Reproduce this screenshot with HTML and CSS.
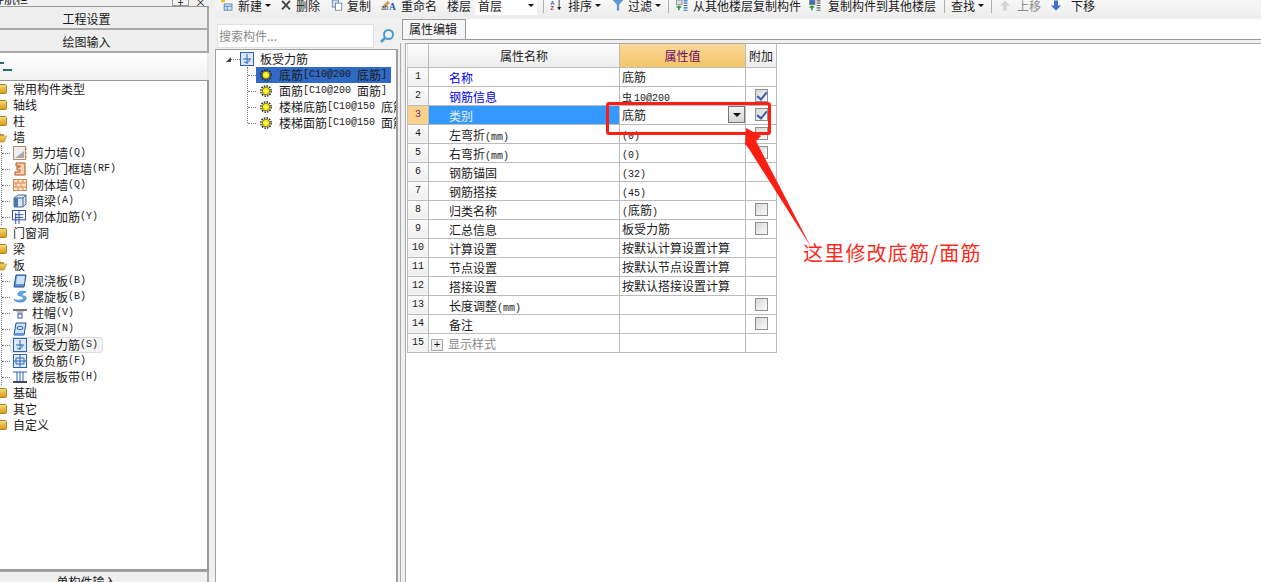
FILE: index.html
```html
<!DOCTYPE html>
<html lang="zh-CN">
<head>
    <meta charset="UTF-8">
    <title>板受力筋 属性编辑</title>
    <link rel="stylesheet" href="styles.css">
</head>
<body>
    <svg class="defs" width="0" height="0">
        <defs>
            <linearGradient id="gold" x1="0" y1="0" x2="0" y2="1"><stop offset="0" stop-color="#f8dc78"/><stop offset="1" stop-color="#d89a10"/></linearGradient>
            <symbol id="folder" viewBox="0 0 12 12"><rect x="0.5" y="1.5" width="11" height="9" rx="1" fill="url(#gold)" stroke="#a8843a"/></symbol>
            <symbol id="folder-open" viewBox="0 0 12 12"><path d="M0 2h5l1 1h3v2H4L2 10H0z" fill="#b89a50"/><path d="M3 5h9l-3 6H0z" fill="url(#gold)" stroke="#b08c3c" stroke-width=".6"/></symbol>
            <symbol id="gear" viewBox="0 0 12 12"><circle cx="6" cy="6" r="5.2" fill="none" stroke="#222" stroke-width="1.4" stroke-dasharray="1.6 1.1"/><circle cx="6" cy="6" r="3.800" fill="#ffee00" stroke="#555510" stroke-width=".8"/><circle cx="6" cy="6" r="1.200" fill="#fffbb0"/></symbol>
            <symbol id="rebar" viewBox="0 0 14 14"><rect x=".5" y=".5" width="13" height="13" fill="#dbe8f8" stroke="#2a62b8"/><path d="M3 7h8M7 2v10M4 10c4 2 6-1 5-3" fill="none" stroke="#2a62b8"/></symbol>
        </defs>
    </svg>

    <div class="app">
        <!-- 左侧导航 -->
        <aside class="nav">
            <div class="nav-top">
                <span class="nav-title">模块导航栏</span>
                <span class="nav-btn">+</span>
                <span class="nav-btn plain">×</span>
            </div>
            <div class="nav-tab">工程设置</div>
            <div class="nav-tab">绘图输入</div>
            <div class="nav-tools"><span class="collapse-mark"></span></div>

            <div class="nav-tree">
                <div class="group"><svg class="fold"><use href="#folder"/></svg>常用构件类型</div>
                <div class="group"><svg class="fold"><use href="#folder"/></svg>轴线</div>
                <div class="group"><svg class="fold"><use href="#folder"/></svg>柱</div>
                <div class="group"><svg class="fold"><use href="#folder-open"/></svg>墙</div>
                <div class="kids">
                    <div class="kid"><i class="dots"></i><span class="item"><svg class="ico" viewBox="0 0 14 14"><rect x=".5" y=".5" width="12" height="13" fill="#eee" stroke="#b98a66"/><path d="M2 12l9-7v7z" fill="#aaa"/><path d="M13 2v10" stroke="#e07020" stroke-dasharray="2 2"/></svg>剪力墙<b class="m">(Q)</b></span></div>
                    <div class="kid"><i class="dots"></i><span class="item"><svg class="ico" viewBox="0 0 14 14"><path d="M3 1h9v12H2v-3h5V8H4V5h3V4H3z" fill="#f6d2ac" stroke="#b0501c"/></svg>人防门框墙<b class="m">(RF)</b></span></div>
                    <div class="kid"><i class="dots"></i><span class="item"><svg class="ico" viewBox="0 0 14 14"><rect x=".5" y="1.5" width="13" height="11" fill="#fbe3cc" stroke="#d88850"/><path d="M1 5h12M1 9h12M5 2v3M10 2v3M3 5v4M8 5v4M5 9v3M10 9v3" stroke="#d88850"/></svg>砌体墙<b class="m">(Q)</b></span></div>
                    <div class="kid"><i class="dots"></i><span class="item"><svg class="ico" viewBox="0 0 14 14"><path d="M1 4l4-3h8v9l-3 3H1z" fill="#d8e6f4" stroke="#4a6a94"/><path d="M1 4h9v9M10 4l3-3" fill="none" stroke="#4a6a94"/><rect x="1" y="4" width="4" height="9" fill="#4a78b0"/></svg>暗梁<b class="m">(A)</b></span></div>
                    <div class="kid"><i class="dots"></i><span class="item shift"><svg class="ico" viewBox="0 0 15 15"><rect x=".5" y=".5" width="14" height="10" fill="none" stroke="#2444a8"/><path d="M7.500 1v14M3 5h9M3 8h9M4 3v12" fill="none" stroke="#2444a8"/></svg>砌体加筋<b class="m">(Y)</b></span></div>
                </div>
                <div class="group"><svg class="fold"><use href="#folder"/></svg>门窗洞</div>
                <div class="group"><svg class="fold"><use href="#folder"/></svg>梁</div>
                <div class="group"><svg class="fold"><use href="#folder-open"/></svg>板</div>
                <div class="kids">
                    <div class="kid"><i class="dots"></i><span class="item"><svg class="ico" viewBox="0 0 14 14"><path d="M3 1h10l-2 12H1z" fill="#5c94dc" stroke="#1c4c9c"/><path d="M4 2h8l-1 8H3z" fill="#cfe2f8"/></svg>现浇板<b class="m">(B)</b></span></div>
                    <div class="kid"><i class="dots"></i><span class="item"><svg class="ico" viewBox="0 0 16 14"><path d="M15 1C9-1 4 2 6 5c2 2 6 0 6 3 0 3-6 3-11 2 4 4 14 4 14-2 0-3-6-2-5-4 1-1 3-2 5-3z" fill="#5ca8ec" stroke="#1c70c8" stroke-width=".7"/></svg>螺旋板<b class="m">(B)</b></span></div>
                    <div class="kid"><i class="dots"></i><span class="item"><svg class="ico" viewBox="0 0 14 14"><rect x="0" y="3" width="14" height="2" fill="#777"/><path d="M3 5h8L9 8H5z" fill="#bbb"/><rect x="5" y="8" width="4" height="4" fill="#fff" stroke="#2456b0"/></svg>柱帽<b class="m">(V)</b></span></div>
                    <div class="kid"><i class="dots"></i><span class="item"><svg class="ico" viewBox="0 0 14 14"><path d="M3 1h10l-2 12H1z" fill="#cfe2f8" stroke="#1c4c9c"/><ellipse cx="7" cy="6" rx="3" ry="1.500" fill="#fff" stroke="#1c4cc0"/><path d="M2 11h9v2H1z" fill="#5c94dc"/></svg>板洞<b class="m">(N)</b></span></div>
                    <div class="kid"><i class="dots"></i><span class="item hover"><svg class="ico"><use href="#rebar"/></svg>板受力筋<b class="m">(S)</b></span></div>
                    <div class="kid"><i class="dots"></i><span class="item"><svg class="ico" viewBox="0 0 14 14"><rect x=".5" y=".5" width="13" height="13" fill="#e4eefa" stroke="#2a62b8"/><path d="M3 4h8v6H3zM1 7h12M7 1v12" fill="none" stroke="#2a62b8"/></svg>板负筋<b class="m">(F)</b></span></div>
                    <div class="kid"><i class="dots"></i><span class="item"><svg class="ico" viewBox="0 0 14 14"><path d="M0 2h14M4 2v9M7 2v9M10 2v9" fill="none" stroke="#2a62b8"/><rect x="0" y="11" width="14" height="2" fill="#445"/></svg>楼层板带<b class="m">(H)</b></span></div>
                </div>
                <div class="group"><svg class="fold"><use href="#folder"/></svg>基础</div>
                <div class="group"><svg class="fold"><use href="#folder"/></svg>其它</div>
                <div class="group"><svg class="fold"><use href="#folder"/></svg>自定义</div>
            </div>
            <div class="nav-tab bottom">单构件输入</div>
        </aside>

        <div class="main">
            <!-- 工具栏 -->
            <div class="toolbar">
                <span class="tool w-new"><svg class="tico" viewBox="0 0 16 14"><path d="M1 0h5v3H1z" fill="#f2c12e"/><rect x="5" y="5" width="10" height="8" fill="#d4e4f6" stroke="#4a78b0"/><path d="M5 8h10M9 8v5" stroke="#4a78b0"/></svg>新建<i class="caret"></i></span>
                <span class="tool w-del"><svg class="tico" viewBox="0 0 14 14"><path d="M2 1l10 11M12 1L2 12" stroke="#444" stroke-width="2.400"/></svg>删除</span>
                <span class="tool w-copy"><svg class="tico" viewBox="0 0 14 14"><rect x="1" y="0" width="8" height="9" fill="#cfe0f4" stroke="#5a7ca8"/><rect x="5" y="4" width="8" height="9" fill="#fff" stroke="#5a7ca8"/></svg>复制</span>
                <span class="tool w-ren"><svg class="tico wide" viewBox="0 0 20 14"><path d="M2 8l6-7 3 3-6 6z" fill="#c8a060"/><text x="0" y="13" class="svg-ab">ab</text><text x="10" y="13" class="svg-a">A</text></svg>重命名</span>
                <span class="floor-label">楼层</span>
                <span class="floor-select"><span>首层</span><i class="caret"></i></span>
                <span class="tsep"></span>
                <span class="tool w-sort"><svg class="tico" viewBox="0 0 14 14"><text x="0" y="6" class="svg-az b">A</text><text x="0" y="13" class="svg-az r">Z</text><path d="M11 0v11" stroke="#222"/><path d="M8.500 9h5L11 13z" fill="#222"/></svg>排序<i class="caret"></i></span>
                <span class="tool w-filter"><svg class="tico" viewBox="0 0 14 14"><path d="M1 0h12L8 6v7H6V6z" fill="#5ca0e0" stroke="#2a6cb0" stroke-width=".6"/></svg>过滤<i class="caret"></i></span>
                <span class="tsep"></span>
                <span class="tool w-from"><svg class="tico" viewBox="0 0 16 14"><rect x="1" y="0" width="7" height="6" fill="#ddd" stroke="#888"/><path d="M1 9h6M4 7v6" stroke="#2a9a3c" stroke-width="2"/><path d="M10 1h5M10 4h5M10 7h5M10 10h5M10 13h5" stroke="#3a6cc0" stroke-width="1.500"/></svg>从其他楼层复制构件</span>
                <span class="tool w-to"><svg class="tico" viewBox="0 0 16 14"><rect x="1" y="0" width="7" height="6" fill="#3a6cc0" stroke="#888"/><path d="M1 9h6M4 7v6" stroke="#2a9a3c" stroke-width="2"/><path d="M10 1h5M10 4h5M10 7h5M10 10h5M10 13h5" stroke="#666" stroke-width="1.500"/></svg>复制构件到其他楼层</span>
                <span class="tsep"></span>
                <span class="tool w-find">查找<i class="caret"></i></span>
                <span class="tsep"></span>
                <span class="tool w-up off"><svg class="tico small" viewBox="0 0 10 10"><path d="M5 0l5 5H7v5H3V5H0z" fill="#d4d4d4"/></svg>上移</span>
                <span class="tool w-down"><svg class="tico small" viewBox="0 0 10 10"><path d="M3 0h4v5h3l-5 5-5-5h3z" fill="#3f70d0"/></svg>下移</span>
            </div>

            <div class="panes">
                <!-- 构件列表 -->
                <section class="list-pane">
                    <div class="search-row">
                        <div class="search">搜索构件...</div>
                        <svg class="search-ico" viewBox="0 0 16 16"><circle cx="9.500" cy="6.500" r="4.500" fill="#e8f4fc" stroke="#4c98d0" stroke-width="2"/><path d="M6 10l-4 4" stroke="#4c98d0" stroke-width="2.500"/></svg>
                    </div>
                    <div class="list-tree">
                        <div class="root"><i class="tri"></i><i class="root-dots"></i><svg class="ico"><use href="#rebar"/></svg>板受力筋</div>
                        <div class="list-kids">
                            <div class="lrow"><i class="dots"></i><span class="litem sel"><svg class="gear"><use href="#gear"/></svg>底筋<b class="m">[C10@200 </b>底筋<b class="m">]</b></span></div>
                            <div class="lrow"><i class="dots"></i><span class="litem"><svg class="gear"><use href="#gear"/></svg>面筋<b class="m">[C10@200 </b>面筋<b class="m">]</b></span></div>
                            <div class="lrow"><i class="dots"></i><span class="litem"><svg class="gear"><use href="#gear"/></svg>楼梯底筋<b class="m">[C10@150 </b>底筋<b class="m">]</b></span></div>
                            <div class="lrow"><i class="dots"></i><span class="litem"><svg class="gear"><use href="#gear"/></svg>楼梯面筋<b class="m">[C10@150 </b>面筋<b class="m">]</b></span></div>
                        </div>
                    </div>
                </section>

                <!-- 属性编辑 -->
                <section class="prop-pane">
                    <div class="tabs"><span class="tab">属性编辑</span></div>
                    <div class="tab-body">
                        <table class="grid">
                            <colgroup><col class="c-num"><col class="c-name"><col class="c-val"><col class="c-add"></colgroup>
                            <thead>
                                <tr><th></th><th>属性名称</th><th class="hl">属性值</th><th>附加</th></tr>
                            </thead>
                            <tbody>
                                <tr><td class="num">1</td><td class="name blue">名称</td><td class="val">底筋</td><td></td></tr>
                                <tr><td class="num">2</td><td class="name blue">钢筋信息</td><td class="val"><b class="steel">虫</b><b class="m">10@200</b></td><td class="add"><i class="chk on"></i></td></tr>
                                <tr class="cur"><td class="num">3</td><td class="name">类别</td><td class="val"><div class="combo">底筋<span class="combo-btn"><i class="caret"></i></span></div></td><td class="add"><i class="chk on"></i></td></tr>
                                <tr><td class="num">4</td><td class="name">左弯折<b class="m">(mm)</b></td><td class="val"><b class="m">(0)</b></td><td class="add"><i class="chk"></i></td></tr>
                                <tr><td class="num">5</td><td class="name">右弯折<b class="m">(mm)</b></td><td class="val"><b class="m">(0)</b></td><td class="add"><i class="chk"></i></td></tr>
                                <tr><td class="num">6</td><td class="name">钢筋锚固</td><td class="val"><b class="m">(32)</b></td><td></td></tr>
                                <tr><td class="num">7</td><td class="name">钢筋搭接</td><td class="val"><b class="m">(45)</b></td><td></td></tr>
                                <tr><td class="num">8</td><td class="name">归类名称</td><td class="val"><b class="m">(</b>底筋<b class="m">)</b></td><td class="add"><i class="chk"></i></td></tr>
                                <tr><td class="num">9</td><td class="name">汇总信息</td><td class="val">板受力筋</td><td class="add"><i class="chk"></i></td></tr>
                                <tr><td class="num">10</td><td class="name">计算设置</td><td class="val">按默认计算设置计算</td><td></td></tr>
                                <tr><td class="num">11</td><td class="name">节点设置</td><td class="val">按默认节点设置计算</td><td></td></tr>
                                <tr><td class="num">12</td><td class="name">搭接设置</td><td class="val">按默认搭接设置计算</td><td></td></tr>
                                <tr><td class="num">13</td><td class="name">长度调整<b class="m">(mm)</b></td><td class="val"></td><td class="add"><i class="chk"></i></td></tr>
                                <tr><td class="num">14</td><td class="name">备注</td><td class="val"></td><td class="add"><i class="chk"></i></td></tr>
                                <tr><td class="num">15</td><td class="name grey"><i class="plus">+</i>显示样式</td><td class="val"></td><td></td></tr>
                            </tbody>
                        </table>
                    </div>
                </section>
            </div>
        </div>
    </div>

    <!-- 红色标注 -->
    <div class="mark-box"></div>
    <svg class="mark-arrow" width="1261" height="582"><polygon points="746,128 761,136 756,141 811,247 749,149 745,144" fill="#fb1f13"/></svg>
    <div class="mark-text">这里修改底筋/面筋</div>
</body>
</html>
```

FILE: styles.css
```css
* {
    box-sizing: border-box;
}

html, body {
    margin: 0;
    height: 100%;
    overflow: hidden;
}

body {
    font-family: "Noto Sans CJK SC", "Liberation Sans", sans-serif;
    font-size: 12px;
    color: #1a1a1a;
    background: #f0f0f0;
}

.defs {
    position: absolute;
}

/* 等宽西文, 10px 的 Liberation Mono 每字 6px */
.m {
    font-family: "Liberation Mono", monospace;
    font-size: 10px;
    font-weight: normal;
    line-height: 1;
    white-space: pre;
}

.app {
    display: flex;
    height: 582px;
}

/* 左侧导航 */
.nav {
    width: 209px;
    flex: none;
    display: flex;
    flex-direction: column;
    height: 582px;
    overflow: hidden;
}

.nav-top {
    height: 7px;
    flex: none;
    display: flex;
    align-items: flex-end;
    border-bottom: 1px solid #999;
    overflow: hidden;
}

.nav-title {
    margin-right: auto;
    margin-left: -32px;
    height: 14px;
    flex: none;
    line-height: 14px;
}

.nav-btn {
    width: 17px;
    height: 6px;
    border: 1px solid #999;
    border-top: 0;
    text-align: center;
    line-height: 4px;
    background: #f4f4f4;
    margin-right: 3px;
    font-size: 11px;
}

.nav-btn.plain {
    border: 0;
    background: none;
    margin-right: 0;
}

.nav-tab {
    height: 23px;
    line-height: 23px;
    text-align: center;
    background: #efefef;
    border-bottom: 2px solid #a8a8a8;
    border-right: 2px solid #a8a8a8;
    flex: none;
    padding-right: 34px;
}

.nav-tab.bottom {
    height: 11px;
    border-bottom: 0;
    border-top: 1px solid #a8a8a8;
    line-height: 20px;
    overflow: hidden;
}

.nav-tools {
    height: 27px;
    flex: none;
    background: linear-gradient(#ffffff, #f2f2f2);
    border-right: 2px solid #e8e8e8;
    padding-top: 9px;
}

.collapse-mark {
    display: block;
    width: 12px;
    height: 9px;
    background:
        linear-gradient(#2a6a70, #2a6a70) 0 0 / 4px 2px no-repeat,
        linear-gradient(#2a6a70, #2a6a70) 3px 7px / 9px 2px no-repeat;
}

.nav-tree {
    flex: 1;
    background: #fff;
    border-top: 1px solid #999;
    border-right: 2px solid #999;
    border-bottom: 2px solid #999;
    overflow: hidden;
}

.group {
    height: 16px;
    line-height: 16px;
    display: flex;
    align-items: center;
    gap: 6px;
    margin-left: -5px;
    white-space: nowrap;
}

.fold {
    width: 12px;
    height: 12px;
    flex: none;
}

.kids {
    margin-left: 1px;
    border-left: 1px dotted #777;
}

.kid {
    height: 16px;
    display: flex;
    align-items: center;
}

.dots {
    width: 8px;
    flex: none;
    border-top: 1px dotted #777;
}

.item {
    display: flex;
    align-items: center;
    height: 16px;
    padding: 0 4px 0 2px;
    border: 1px solid transparent;
    border-radius: 3px;
    white-space: nowrap;
    line-height: 14px;
}

.item .ico {
    margin-right: 5px;
}

.item.hover {
    background: #f4f4f4;
    border-color: #dcdcdc;
}

.item.shift .ico {
    margin-left: -1px;
    margin-right: 6px;
}

.ico {
    width: 14px;
    height: 14px;
    flex: none;
}

/* 工具栏 */
.main {
    flex: 1;
    min-width: 0;
    display: flex;
    flex-direction: column;
    padding-left: 6px;
}

.toolbar {
    height: 18px;
    flex: none;
    display: flex;
    align-items: flex-start;
    background: linear-gradient(#f8f8f8, #ececec);
    white-space: nowrap;
    line-height: 11px;
    overflow: hidden;
}

.tool {
    display: flex;
    align-items: flex-start;
    flex: none;
    line-height: 11px;
}

.off {
    color: #8a8a8a;
}

.tico {
    width: 14px;
    height: 11px;
    flex: none;
    margin-right: 3px;
}

.tico.wide {
    width: 18px;
}

.tico.small {
    width: 10px;
}

.svg-ab {
    font: 8px "Liberation Sans", sans-serif;
    fill: #333;
}

.svg-a {
    font: bold 12px "Liberation Serif", serif;
    fill: #2458b0;
}

.svg-az {
    font: bold 7px "Liberation Sans", sans-serif;
}

.svg-az.b {
    fill: #2458b0;
}

.svg-az.r {
    fill: #a03020;
}

.caret {
    display: inline-block;
    width: 0;
    height: 0;
    border-left: 3px solid transparent;
    border-right: 3px solid transparent;
    border-top: 3px solid #111;
    margin-left: 3px;
    margin-top: 4px;
    flex: none;
}

.tsep {
    width: 1px;
    height: 13px;
    flex: none;
    background: #b0b0b0;
}

.w-new { margin-left: 2px; width: 62px; }
.w-new .tico { margin-right: 4px; margin-left: 2px; width: 15px; }
.w-del { width: 51px; }
.w-copy { width: 50px; }
.w-ren { width: 67px; }

.floor-label {
    width: 28px;
    flex: none;
}

.floor-select {
    width: 62px;
    height: 15px;
    flex: none;
    background: #fff;
    display: flex;
    justify-content: space-between;
    padding: 0 3px;
    margin-right: 6px;
}

.w-sort { margin-left: 5px; width: 62px; }
.w-sort .tico { margin-right: 5px; }
.w-filter { width: 57px; }
.w-from { margin-left: 6px; width: 133px; }
.w-from .tico { margin-right: 4px; }
.w-to { width: 136px; }
.w-to .tico { margin-right: 6px; }
.w-find { margin-left: 6px; width: 40px; }
.w-up { margin-left: 8px; width: 51px; }
.w-up .tico { margin-right: 7px; }
.w-down .tico { margin-right: 10px; }

/* 下方两栏 */
.panes {
    flex: 1;
    display: flex;
    min-height: 0;
}

.list-pane {
    width: 183px;
    flex: none;
    padding-top: 6px;
    display: flex;
    flex-direction: column;
}

.search-row {
    display: flex;
    align-items: center;
    height: 24px;
    flex: none;
}

.search {
    width: 157px;
    height: 24px;
    margin-left: 2px;
    background: #fff;
    border: 1px solid #e0e0e0;
    color: #8a8a8a;
    line-height: 22px;
    padding-left: 1px;
}

.search-ico {
    width: 16px;
    height: 16px;
    margin-left: 5px;
}

.list-tree {
    flex: 1;
    margin-top: 1px;
    background: #fff;
    border: 1px solid #a0a0a0;
    border-bottom: 0;
    border-right-width: 2px;
    padding-top: 1px;
    overflow: hidden;
}

.root {
    height: 16px;
    display: flex;
    align-items: center;
    white-space: nowrap;
    line-height: 14px;
}

.root .ico {
    margin-right: 6px;
}

.tri {
    width: 0;
    height: 0;
    margin-left: 10px;
    border-left: 5px solid transparent;
    border-bottom: 5px solid #444;
}

.root-dots {
    width: 9px;
    border-top: 1px dotted #777;
}

.list-kids {
    margin-left: 31px;
    border-left: 1px dotted #777;
    height: 56px;
}

.lrow {
    height: 16px;
    display: flex;
    align-items: center;
    white-space: nowrap;
}

.litem {
    display: flex;
    align-items: center;
    flex: none;
    width: 135px;
    height: 16px;
    padding-left: 4px;
    line-height: 16px;
}

.litem.sel {
    background: #316ac5;
}

.gear {
    width: 12px;
    height: 12px;
    flex: none;
    margin-right: 7px;
}

/* 属性编辑 */
.prop-pane {
    flex: 1;
    min-width: 0;
    padding-left: 5px;
    display: flex;
    flex-direction: column;
}

.tabs {
    height: 21px;
    flex: none;
    margin-top: 1px;
    border-bottom: 1px solid #999;
    background: #fff;
    margin-left: -1px;
    display: flex;
    box-shadow: -5px 0 0 #f0f0f0;
}

.tab {
    width: 64px;
    height: 20px;
    background: #f6f6f6;
    border: 1px solid #999;
    border-bottom: 0;
    line-height: 18px;
    padding-left: 6px;
}

.tab-body {
    flex: 1;
    background: #fff;
    border-top: 1px solid #aaa;
    border-left: 1px solid #aaa;
    margin-top: 3px;
    padding-left: 1px;
    margin-left: 2px;
    box-shadow: -4px 0 0 #f0f0f0, -5px 0 0 #aaa;
}

.grid {
    table-layout: fixed;
    border-collapse: collapse;
    width: 369px;
}

.c-num { width: 21px; }
.c-name { width: 191px; }
.c-val { width: 126px; }
.c-add { width: 31px; }

.grid th, .grid td {
    height: 19px;
    border: 1px solid #bcbcbc;
    padding: 0;
    font-weight: normal;
    line-height: 17px;
    white-space: nowrap;
    overflow: hidden;
}

.grid th {
    height: 23px;
    text-align: center;
    background: linear-gradient(#fdfdfd, #ececec);
    border-top: 0;
    border-left-color: #ddd;
}

.grid th.hl {
    color: #6a0a6a;
    background: linear-gradient(#fad898, #f3c468);
}

.num {
    text-align: center;
    background: linear-gradient(#fbfbfb, #efefef);
    font-family: "Liberation Mono", monospace;
    font-size: 10px;
}

.grid .name {
    padding-left: 20px;
    padding-top: 1px;
}

.name.blue {
    color: #0000f0;
}

.grid .name.grey {
    color: #888;
    padding-left: 2px;
}

.grid .val {
    padding-left: 2px;
}

.steel {
    font-size: 10px;
    font-weight: normal;
    line-height: 1;
    margin-right: 2px;
}

.add {
    text-align: center;
}

.cur .num {
    background: #fcd18c;
    color: #7a2a6a;
}

.cur .name {
    background: #3399ff;
    color: #e8f4ff;
}

.combo {
    display: flex;
    align-items: center;
    justify-content: space-between;
    height: 17px;
}

.combo-btn {
    width: 17px;
    height: 17px;
    background: linear-gradient(#f4f4f4, #d4d4d4);
    border: 1px solid #777;
    display: flex;
    justify-content: center;
    align-items: center;
}

.combo-btn .caret {
    margin: 0;
    border-left-width: 4px;
    border-right-width: 4px;
    border-top-width: 4px;
}

.chk {
    display: block;
    width: 13px;
    height: 13px;
    margin: 0 auto;
    border: 1px solid #909090;
    background: linear-gradient(135deg, #d8d8d8, #fafafa);
    position: relative;
}

.chk.on::after {
    content: "";
    position: absolute;
    left: 3px;
    top: 0;
    width: 4px;
    height: 8px;
    border-right: 2px solid #3a5cb0;
    border-bottom: 2px solid #3a5cb0;
    transform: rotate(40deg);
}

.plus {
    display: inline-block;
    width: 12px;
    height: 12px;
    border: 1px solid #aaa;
    background: #eee;
    color: #111;
    font: 11px/10px "Liberation Mono", monospace;
    text-align: center;
    margin-right: 5px;
    vertical-align: middle;
}

/* 红色标注, 盖在界面之上 */
.mark-box {
    position: absolute;
    left: 606px;
    top: 102px;
    width: 165px;
    height: 33px;
    border: 3px solid #fb1f13;
    border-radius: 3px;
}

.mark-arrow {
    position: absolute;
    left: 0;
    top: 0;
}

.mark-text {
    position: absolute;
    left: 803px;
    top: 238px;
    font-size: 20px;
    line-height: 29px;
    letter-spacing: 1.2px;
    color: #fb2a20;
    white-space: nowrap;
}
```
